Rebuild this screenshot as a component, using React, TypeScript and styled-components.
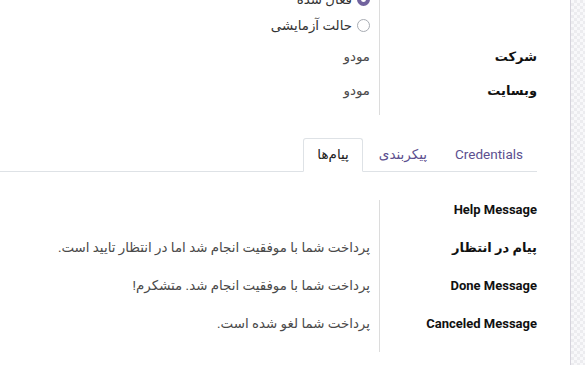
import React from "react";
import styled, { createGlobalStyle } from "styled-components";

const Global = createGlobalStyle`
  html, body { margin: 0; padding: 0; background: #fff; }
  body { font-family: Roboto, "DejaVu Sans", sans-serif; font-size: 13px; color: #212529; }
  * { box-sizing: border-box; }
`;

const Page = styled.div`
  display: flex;
  width: 585px;
  height: 365px;
  overflow: hidden;
`;

const Sheet = styled.div`
  width: 571px;
  flex: none;
  background: #fff;
  border-right: 1px solid #d5d3dc;
  box-shadow: 1px 0 2px rgba(0, 0, 0, 0.06);
  direction: rtl;
  padding-right: 33px;
`;

const Backdrop = styled.div`
  flex: 1;
  background-color: #f4f4f6;
  background-image: repeating-conic-gradient(#ececef 0% 25%, #f8f8fa 0% 50%);
  background-size: 6px 6px;
`;

const Group = styled.div<{ $top?: number }>`
  display: grid;
  grid-template-columns: 158px 1fr;
  margin-top: ${(p) => p.$top ?? 0}px;
`;

const Label = styled.div<{ $h: number }>`
  height: ${(p) => p.$h}px;
  border-left: 1px solid #dcdcdc;
  font-weight: 700;
  line-height: 19px;
  color: #111;
  white-space: nowrap;
`;

const Value = styled.div<{ $h: number }>`
  height: ${(p) => p.$h}px;
  padding-right: 9px;
  line-height: 19px;
  font-size: 13.4px;
  color: #4a4a4a;
  white-space: nowrap;
`;

const RadioList = styled.div`
  display: flex;
  flex-direction: column;
`;

const RadioItem = styled.label`
  display: flex;
  align-items: center;
  gap: 2px;
  height: 26px;
  color: #333;
`;

const Circle = styled.span<{ $on?: boolean }>`
  width: 13px;
  height: 13px;
  border-radius: 50%;
  flex: none;
  margin-left: 3px;
  border: ${(p) => (p.$on ? "4px solid #71639e" : "1px solid #a8acb3")};
  background: #fff;
`;

const TabBar = styled.div`
  display: flex;
  margin-top: 23px;
  height: 34px;
  border-bottom: 1px solid #dee2e6;
  margin-left: -10px;
`;

const Tab = styled.div<{ $active?: boolean }>`
  padding: 0 13px;
  height: 34px;
  line-height: 31px;
  font-size: 13.5px;
  white-space: nowrap;
  color: ${(p) => (p.$active ? "#222" : "#5c4f8f")};
  border: 1px solid ${(p) => (p.$active ? "#dee2e6" : "transparent")};
  border-bottom-color: ${(p) => (p.$active ? "#fff" : "transparent")};
  border-radius: 3px 3px 0 0;
  background: ${(p) => (p.$active ? "#fff" : "transparent")};
  margin-right: ${(p) => (p.$active ? "2px" : "0")};
`;

const Messages = styled(Group)`
  margin-top: 28px;
`;

const LatinLabel = styled.span`
  direction: ltr;
  unicode-bidi: isolate;
`;

export default function App() {
  return (
    <>
      <Global />
      <Page>
        <Sheet>
          <Group $top={-14}>
            <Label $h={61} />
            <Value $h={61}>
              <RadioList>
                <RadioItem>
                  <Circle $on />
                  فعال شده
                </RadioItem>
                <RadioItem>
                  <Circle />
                  حالت آزمایشی
                </RadioItem>
              </RadioList>
            </Value>
            <Label $h={34}>شرکت</Label>
            <Value $h={34}>مودو</Value>
            <Label $h={34}>وبسایت</Label>
            <Value $h={34}>مودو</Value>
          </Group>
          <TabBar>
            <Tab>Credentials</Tab>
            <Tab>پیکربندی</Tab>
            <Tab $active>پیام‌ها</Tab>
          </TabBar>
          <Messages>
            <Label $h={38}>
              <LatinLabel>Help Message</LatinLabel>
            </Label>
            <Value $h={38} />
            <Label $h={38}>پیام در انتظار</Label>
            <Value $h={38}>پرداخت شما با موفقیت انجام شد اما در انتظار تایید است.</Value>
            <Label $h={38}>
              <LatinLabel>Done Message</LatinLabel>
            </Label>
            <Value $h={38}>پرداخت شما با موفقیت انجام شد. متشکرم!</Value>
            <Label $h={38}>
              <LatinLabel>Canceled Message</LatinLabel>
            </Label>
            <Value $h={38}>پرداخت شما لغو شده است.</Value>
          </Messages>
        </Sheet>
        <Backdrop />
      </Page>
    </>
  );
}
